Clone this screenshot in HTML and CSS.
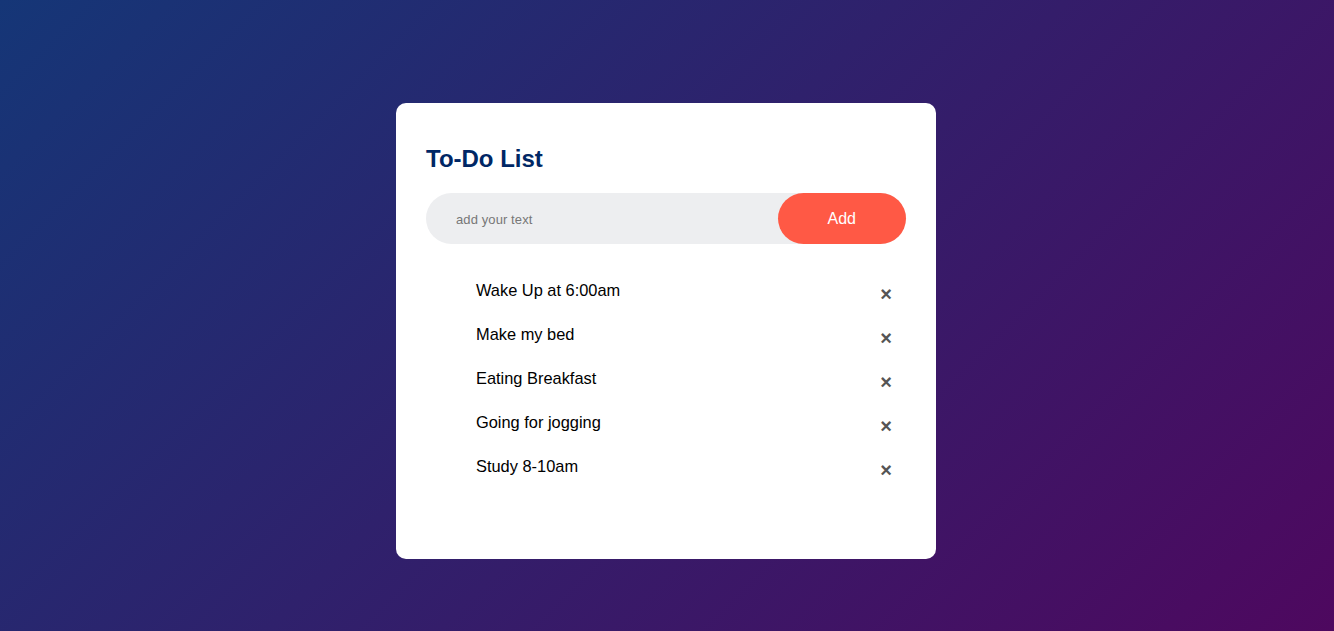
FILE: index.html
```html
<!DOCTYPE html>
<html lang="en">
<head>
<meta charset="utf-8">
<title>To-Do List</title>
<link rel="stylesheet" href="styles.css">
</head>
<body>
<div class="container">
  <div class="todo-app">
    <h2 class="title">To-Do List</h2>
    <div class="row">
      <input class="task-input" type="text" placeholder="add your text">
      <button class="add-btn">Add</button>
    </div>
    <ul class="list">
      <li class="item">Wake Up at 6:00am<span class="remove">×</span></li>
      <li class="item">Make my bed<span class="remove">×</span></li>
      <li class="item">Eating Breakfast<span class="remove">×</span></li>
      <li class="item">Going for jogging<span class="remove">×</span></li>
      <li class="item">Study 8-10am<span class="remove">×</span></li>
    </ul>
  </div>
</div>
</body>
</html>
```
FILE: styles.css
```css
* {
  margin: 0;
  padding: 0;
  box-sizing: border-box;
  font-family: "Liberation Sans", Arial, sans-serif;
}
html, body {
  height: 100%;
}
.container {
  width: 100%;
  min-height: 100vh;
  background: linear-gradient(135deg, #153677, #4e085f);
  padding: 103px 12px 10px 10px;
}
.todo-app {
  width: 100%;
  max-width: 540px;
  background: #fff;
  margin: 0 auto;
  padding: 40px 30px 71px;
  border-radius: 10px;
}
.title {
  color: #002765;
  font-size: 24px;
  font-weight: bold;
  line-height: 28px;
  margin-top: 2px;
  margin-bottom: 20px;
}
.row {
  display: flex;
  align-items: center;
  justify-content: space-between;
  background: #edeef0;
  border-radius: 30px;
  padding-left: 20px;
  margin-bottom: 24px;
}
.task-input {
  flex: 1;
  border: none;
  outline: none;
  background: transparent;
  padding: 11px 10px 9px;
  font-size: 13px;
  color: #333;
}
.task-input::placeholder {
  color: #777;
  letter-spacing: 0.1px;
}
.add-btn {
  border: none;
  outline: none;
  padding: 16px 50px;
  background: #ff5945;
  color: #fff;
  font-size: 16px;
  line-height: 19px;
  border-radius: 40px;
  cursor: pointer;
}
.list {
  list-style: none;
}
.item {
  position: relative;
  font-size: 16.4px;
  line-height: 20px;
  color: #000;
  padding: 12px 8px 12px 50px;
  cursor: pointer;
  user-select: none;
}
.remove {
  position: absolute;
  right: 0;
  top: 5px;
  width: 40px;
  height: 40px;
  font-size: 20px;
  font-weight: bold;
  color: #555;
  line-height: 42px;
  text-align: center;
  border-radius: 50%;
}
```
